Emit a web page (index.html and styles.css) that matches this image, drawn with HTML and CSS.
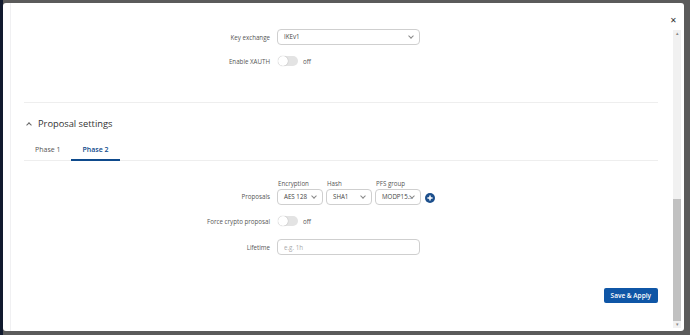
FILE: index.html
```html
<!DOCTYPE html>
<html lang="en">
<head>
    <meta charset="UTF-8">
    <title>IPsec - Proposal settings</title>
    <link rel="stylesheet" href="styles.css">
</head>
<body>
    <div class="modal">
        <div class="modal-body">
            <div class="section">
                <div class="form-row first">
                    <label class="form-label">Key exchange</label>
                    <div class="select wide">IKEv1<span class="caret"></span></div>
                </div>
                <div class="form-row">
                    <label class="form-label">Enable XAUTH</label>
                    <span class="switch"><span class="knob"></span></span>
                    <span class="switch-text">off</span>
                </div>

                <div class="divider top-divider"></div>

                <div class="heading"><span class="chevron"></span>Proposal settings</div>

                <div class="tabs">
                    <div class="tab">Phase 1</div>
                    <div class="tab active">Phase 2</div>
                </div>

                <div class="proposal-row">
                    <label class="form-label">Proposals</label>
                    <div class="proposal-col">
                        <div class="col-title">Encryption</div>
                        <div class="select small">AES 128<span class="caret"></span></div>
                    </div>
                    <div class="proposal-col">
                        <div class="col-title">Hash</div>
                        <div class="select small">SHA1<span class="caret"></span></div>
                    </div>
                    <div class="proposal-col">
                        <div class="col-title">PFS group</div>
                        <div class="select small">MODP15...<span class="caret"></span></div>
                    </div>
                    <span class="add-btn">
                        <svg width="10" height="10" viewBox="0 0 10 10">
                            <circle cx="5" cy="5" r="5" fill="#1c4f8c"/>
                            <path d="M5 2.4v5.2M2.4 5h5.2" stroke="#fff" stroke-width="1.5"/>
                        </svg>
                    </span>
                </div>
                <div class="form-row">
                    <label class="form-label">Force crypto proposal</label>
                    <span class="switch"><span class="knob"></span></span>
                    <span class="switch-text">off</span>
                </div>
                <div class="form-row lifetime">
                    <label class="form-label">Lifetime</label>
                    <input class="input wide" type="text" placeholder="e.g. 1h">
                </div>

                <div class="footer">
                    <button class="btn">Save &amp; Apply</button>
                </div>
            </div>
        </div>
        <div class="side">
            <span class="close">&#x2715;</span>
            <div class="scrollbar">
                <span class="arrow">&#9652;</span>
                <div class="thumb"></div>
                <span class="arrow">&#9662;</span>
            </div>
        </div>
    </div>
</body>
</html>
```

FILE: styles.css
```css
body {
    margin: 0;
    height: 335px;
    font-family: "Open Sans", "Noto Sans", Arial, sans-serif;
    font-size: 6.2px;
    color: #555;
    background: linear-gradient(to right, #111a2e 0 3px, #5b5b5b 3px);
    padding: 3px 6px 4px 3px;
    box-sizing: border-box;
}
.modal {
    display: flex;
    height: 328px;
    background: #fff;
    border-radius: 3px;
}
.modal-body {
    flex: 1;
    padding-left: 7px;
}
.section {
    height: 100%;
    border-left: 1px solid #f0f0f2;
    padding: 26px 15px 0 13px;
    box-sizing: border-box;
}
.form-row {
    display: flex;
    align-items: center;
    height: 16px;
    margin-top: 8px;
}
.form-row.first {
    margin-top: 0;
}
.form-label {
    width: 253px;
    padding-right: 7px;
    box-sizing: border-box;
    text-align: right;
    color: #555;
}
.select, .input {
    position: relative;
    height: 16px;
    border: 1px solid #cfcfcf;
    border-radius: 4px;
    box-sizing: border-box;
    padding: 0 6px;
    line-height: 14px;
    color: #444;
    font-family: inherit;
    font-size: 6.2px;
}
.wide {
    width: 143px;
}
.small {
    width: 46px;
    padding-left: 6px;
}
.input::placeholder {
    color: #aaa;
}
.caret {
    position: absolute;
    right: 6px;
    top: 4px;
    width: 3px;
    height: 3px;
    border-right: 1px solid #888;
    border-bottom: 1px solid #888;
    transform: rotate(45deg);
}
.switch {
    position: relative;
    width: 20px;
    height: 10px;
    margin-left: 1px;
    border-radius: 5px;
    background: #e3e3e3;
}
.knob {
    position: absolute;
    left: 0;
    top: 0;
    width: 10px;
    height: 10px;
    border-radius: 50%;
    background: #fff;
    box-shadow: 0 0 1px rgba(0, 0, 0, 0.35);
}
.switch-text {
    margin-left: 5px;
    color: #555;
}
.divider {
    height: 1px;
    background: #eeeeee;
}
.top-divider {
    margin-top: 33px;
}
.heading {
    display: flex;
    align-items: center;
    margin-top: 14px;
    font-size: 9.3px;
    color: #333;
}
.chevron {
    width: 3px;
    height: 3px;
    border-left: 1px solid #666;
    border-top: 1px solid #666;
    transform: rotate(45deg);
    margin: 2px 7px 0 3px;
}
.tabs {
    display: flex;
    margin-top: 15px;
    border-bottom: 1px solid #eeeeee;
}
.tab {
    padding: 0 11px 5px;
    color: #555;
    font-size: 7px;
    border-bottom: 2px solid transparent;
    margin-bottom: -1px;
}
.tab.active {
    color: #0e4a8c;
    font-weight: 600;
    border-bottom-color: #0e4a8c;
}
.proposal-row {
    display: flex;
    align-items: flex-end;
    margin-top: 18px;
}
.proposal-row .form-label {
    line-height: 16px;
}
.proposal-col {
    margin-right: 3px;
}
.col-title {
    padding-left: 1px;
    margin-bottom: 1px;
    line-height: 9px;
}
.add-btn {
    display: flex;
    height: 16px;
    align-items: center;
    margin-left: 1px;
    padding-top: 2px;
    box-sizing: border-box;
}
.lifetime {
    margin-top: 10px;
}
.footer {
    display: flex;
    justify-content: flex-end;
    margin-top: 33px;
}
.btn {
    height: 15px;
    padding: 0 7px;
    border: none;
    border-radius: 2px;
    background: #0f56a6;
    color: #fff;
    font-family: inherit;
    font-size: 6.5px;
    font-weight: 600;
}
.side {
    width: 8px;
    display: flex;
    flex-direction: column;
    align-items: flex-start;
    padding-right: 3px;
}
.close {
    margin: 11px 0 0 -3px;
    height: 12px;
    font-size: 8px;
    color: #333;
}
.scrollbar {
    margin-top: 4px;
    width: 8px;
    flex: 1;
    margin-bottom: 3px;
    background: #f1f1f1;
    display: flex;
    flex-direction: column;
    align-items: center;
}
.arrow {
    font-size: 5px;
    line-height: 7px;
    color: #888;
}
.thumb {
    margin-top: auto;
    width: 100%;
    height: 122px;
    background: #c1c1c1;
}
```
